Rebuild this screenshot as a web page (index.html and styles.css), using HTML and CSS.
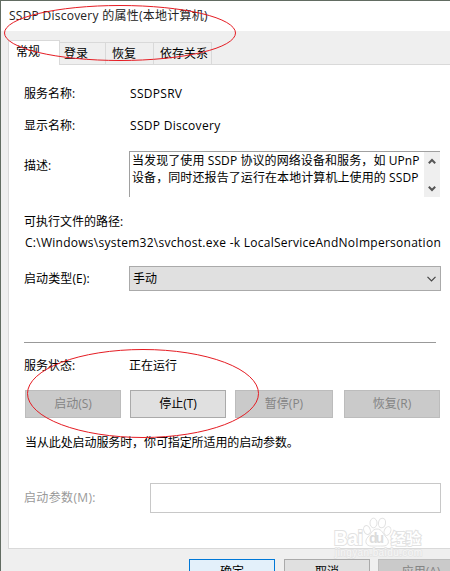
FILE: index.html
```html
<!DOCTYPE html>
<html lang="zh-CN">
<head>
    <meta charset="UTF-8" />
    <meta name="viewport" content="width=device-width, initial-scale=1.0" />
    <title>SSDP Discovery 的属性(本地计算机)</title>
    <link rel="stylesheet" href="styles.css">
</head>
<body>
    <div class="dialog">
        <div class="title-bar"><span class="title">SSDP Discovery 的属性(本地计算机)</span></div>

        <div class="tabs">
            <div class="tab active">常规</div>
            <div class="tab tab-login">登录</div>
            <div class="tab tab-recovery">恢复</div>
            <div class="tab tab-depend">依存关系</div>
        </div>

        <div class="panel">
            <div class="row row-name">
                <span class="label">服务名称:</span>
                <span class="value name-value">SSDPSRV</span>
            </div>
            <div class="row row-display">
                <span class="label">显示名称:</span>
                <span class="value display-value">SSDP Discovery</span>
            </div>
            <div class="row row-desc">
                <span class="label">描述:</span>
                <div class="desc-box">
                    <div class="desc-text">
                        <div class="desc-line">当发现了使用 SSDP 协议的网络设备和服务，如 UPnP</div>
                        <div class="desc-line">设备，同时还报告了运行在本地计算机上使用的 SSDP</div>
                    </div>
                    <div class="scrollbar">
                        <svg width="8" height="7" viewBox="0 0 8 7"><path d="M0.8 5.2L4 2L7.2 5.2" /></svg>
                        <svg width="8" height="7" viewBox="0 0 8 7"><path d="M0.8 1.8L4 5L7.2 1.8" /></svg>
                    </div>
                </div>
            </div>
            <div class="path-label">可执行文件的路径:</div>
            <div class="path-value">C:\Windows\system32\svchost.exe -k LocalServiceAndNoImpersonation</div>
            <div class="row row-type">
                <span class="label">启动类型(E):</span>
                <div class="select">
                    <span>手动</span>
                    <svg width="9" height="6" viewBox="0 0 9 6"><path d="M0.5 0.8L4.5 4.8L8.5 0.8" /></svg>
                </div>
            </div>
            <div class="divider"></div>
            <div class="row row-status">
                <span class="label">服务状态:</span>
                <span class="value">正在运行</span>
            </div>
            <div class="actions">
                <button class="btn" disabled>启动(S)</button>
                <button class="btn">停止(T)</button>
                <button class="btn" disabled>暂停(P)</button>
                <button class="btn" disabled>恢复(R)</button>
            </div>
            <div class="hint">当从此处启动服务时，你可指定所适用的启动参数。</div>
            <div class="row row-param">
                <span class="label">启动参数(M):</span>
                <input type="text" class="param-input" disabled />
            </div>
        </div>

        <div class="footer">
            <button class="btn primary">确定</button>
            <button class="btn">取消</button>
            <button class="btn" disabled>应用(A)</button>
        </div>

        <!-- Red circles over the title and the stop button -->
        <svg class="marks" width="450" height="571" viewBox="0 0 450 571">
            <ellipse cx="120" cy="33" rx="115.5" ry="27.5" />
            <ellipse cx="143" cy="393.5" rx="115.5" ry="44" />
        </svg>

        <svg class="watermark" width="96" height="46" viewBox="0 0 96 46">
            <text class="wm-bai" x="4" y="30" textLength="29" lengthAdjust="spacingAndGlyphs">Bai</text>
            <g class="wm-paw">
                <ellipse cx="37" cy="15" rx="3.2" ry="4.5" transform="rotate(-20 37 15)" />
                <ellipse cx="43.5" cy="8" rx="3.5" ry="4.8" />
                <ellipse cx="52" cy="8" rx="3.5" ry="4.8" transform="rotate(10 52 8)" />
                <ellipse cx="57.5" cy="16" rx="3.2" ry="4.5" transform="rotate(25 57.5 16)" />
                <path d="M47 14C42 14 41 19 38 22C34 26 36 31 41 31C45 31 50 31 53 31C59 31 60 26 56 22C53 19 52 14 47 14Z" />
            </g>
            <text class="wm-du" x="39" y="28" textLength="15">du</text>
            <text class="wm-cn" x="61" y="29" textLength="30">经验</text>
            <text class="wm-url" x="5" y="41" textLength="87">jingyan.baidu.com</text>
        </svg>
    </div>
</body>
</html>
```

FILE: styles.css
```css
* {
    box-sizing: border-box;
}

body {
    margin: 0;
    overflow: hidden;
    font-family: "Open Sans", "Noto Sans CJK SC", sans-serif;
    font-size: 12px;
    line-height: 17px;
    color: #000;
}

.dialog {
    position: relative;
    width: 450px;
    height: 571px;
    overflow: hidden;
    background-color: #efefef;
    border-top: 1px solid #626c62;
    border-left: 1px solid #626c62;
    white-space: nowrap;
}

.title-bar {
    height: 30px;
    padding: 6px 0 0 8px;
    background-color: #fff;
    color: #222;
}

.title {
    letter-spacing: 0.25px;
}

.tabs {
    display: flex;
    align-items: flex-end;
    height: 33px;
    padding-left: 7px;
}

.tab {
    height: 22px;
    padding-top: 2px;
    border-top: 1px solid #d9d9d9;
    border-right: 1px solid #d9d9d9;
}

.tab.active {
    position: relative;
    z-index: 1;
    width: 52px;
    height: 25px;
    margin-bottom: -1px;
    padding: 2px 0 0 7px;
    background-color: #fff;
    border-left: 1px solid #d9d9d9;
}

.tab-login {
    width: 46px;
    padding-left: 4px;
}

.tab-recovery {
    width: 48px;
    padding-left: 6px;
}

.tab-depend {
    width: 58px;
    padding-left: 6px;
}

.panel {
    height: 485px;
    margin-left: 7px;
    padding: 20px 0 0 15px;
    background-color: #fff;
    border: 1px solid #d9d9d9;
    border-right: none;
}

.row {
    display: flex;
}

.label {
    width: 106px;
    flex-shrink: 0;
}

.name-value,
.display-value {
    letter-spacing: 0.3px;
}

.row-name {
    height: 32px;
}

.row-display {
    height: 34px;
}

.row-desc {
    height: 62px;
}

.row-desc .label {
    width: 105px;
    padding-top: 6px;
}

.desc-box {
    display: flex;
    width: 311px;
    height: 46px;
    border-top: 1px solid #a0a0a0;
    border-left: 1px solid #a0a0a0;
}

.desc-text {
    width: 294px;
    padding-left: 2px;
    letter-spacing: 0.09px;
}

.scrollbar {
    display: flex;
    flex-direction: column;
    align-items: center;
    justify-content: space-between;
    width: 16px;
    padding: 6px 0 5px;
    background-color: #efefef;
}

.scrollbar path {
    fill: none;
    stroke: #555;
    stroke-width: 2;
}

.path-label {
    height: 21px;
}

.path-value {
    height: 32px;
    padding-left: 1px;
    letter-spacing: 0.26px;
}

.row-type {
    height: 76px;
}

.row-type .label {
    width: 105px;
    padding-top: 4px;
    letter-spacing: 0.1px;
}

.select {
    display: flex;
    align-items: center;
    justify-content: space-between;
    width: 312px;
    height: 25px;
    padding: 0 4px 0 3px;
    background-color: #e0e0e0;
    border: 1px solid #aaa;
}

.select path {
    fill: none;
    stroke: #444;
    stroke-width: 1.2;
}

.divider {
    width: 412px;
    height: 1px;
    background-color: #999;
}

.row-status {
    height: 47px;
    padding-top: 14px;
}

.row-status .label {
    width: 105px;
}

.btn {
    padding: 0 0 2px;
    background-color: #e0e0e0;
    border: 1px solid #aaa;
    font: inherit;
    color: #000;
}

    .btn:disabled {
        background-color: #cacaca;
        border-color: #bcbcbc;
        color: #848484;
    }

.actions {
    display: grid;
    grid-template-columns: 96px 96px 98px 96px;
    column-gap: 9px;
    height: 28px;
    padding-left: 1px;
}

    .actions .btn:last-child {
        margin: 0 -2px 0 2px;
    }

.hint {
    height: 65px;
    padding: 16px 0 0 1px;
    letter-spacing: -0.1px;
}

.row-param .label {
    width: 126px;
    padding-top: 6px;
    letter-spacing: 0.35px;
    color: #999;
}

.param-input {
    width: 291px;
    height: 30px;
    background-color: #fff;
    border: 1px solid #c8c8c8;
}

.footer {
    display: flex;
    gap: 8px;
    padding: 10px 0 0 188px;
}

    .footer .btn {
        flex-shrink: 0;
        width: 86px;
        height: 24px;
        padding: 0;
    }

    .footer .primary {
        margin-right: 1px;
        background-color: #e3f0fa;
        border-color: #0078d7;
    }

.marks {
    position: absolute;
    top: -1px;
    left: -1px;
    z-index: 2;
}

.marks ellipse {
    fill: none;
    stroke: #e51c23;
    stroke-width: 1;
}

.watermark {
    position: absolute;
    top: 514px;
    left: 329px;
    z-index: 2;
    fill: #fff;
    stroke: #e2e2e2;
    font-family: "Liberation Sans", "Noto Sans CJK SC", sans-serif;
}

.wm-bai, .wm-du, .wm-cn {
    font-weight: bold;
    paint-order: stroke;
    stroke-width: 2;
}

.wm-bai {
    font-size: 20px;
}

.wm-du {
    font-size: 14px;
    fill: #dcdcdc;
    stroke: none;
}

.wm-cn {
    font-size: 15px;
}

.wm-url {
    font-size: 10px;
    fill: #f6f6f6;
    stroke: #e4e4e4;
    stroke-width: 1.5;
    paint-order: stroke;
}
```
